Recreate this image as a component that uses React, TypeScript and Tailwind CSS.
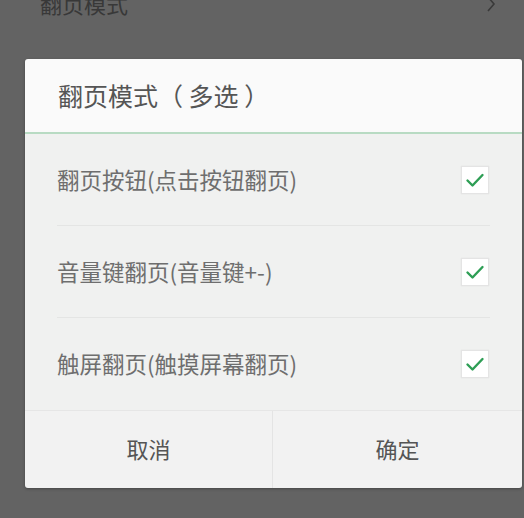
import { useState } from 'react';

const FONT = { fontFamily: '"Noto Sans CJK SC", "Noto Sans", sans-serif' };

const OPTIONS = ['翻页按钮(点击按钮翻页)', '音量键翻页(音量键+-)', '触屏翻页(触摸屏幕翻页)'];

function CheckBox({ checked }: { checked: boolean }) {
  return (
    <div className="flex h-[28px] w-[28px] items-center justify-center border border-[#e4e4e4] bg-white shadow-[0_0_1px_rgba(0,0,0,0.1)]">
      {checked && (
        <svg width="22" height="22" viewBox="0 0 22 22" fill="none">
          <path d="M3.5 11.5 L8.5 16.5 L18.5 6" stroke="#2e9e55" strokeWidth="2.4" strokeLinecap="round" strokeLinejoin="round" />
        </svg>
      )}
    </div>
  );
}

export default function App() {
  const [checked, setChecked] = useState([true, true, true]);

  const toggle = (i: number) => setChecked((c) => c.map((v, j) => (j === i ? !v : v)));

  return (
    <div className="relative h-[518px] w-[524px] overflow-hidden bg-[#636363]" style={FONT}>
      <div className="flex h-[59px] items-start justify-between pl-[40px] pr-[28px]">
        <span className="mt-[-12px] text-[22px] leading-[30px] text-[#383838]">翻页模式</span>
        <svg width="10" height="16" viewBox="0 0 10 16" className="mt-[-4px]" fill="none">
          <path d="M2 1 L8 8 L2 15" stroke="#3a3a3a" strokeWidth="1.6" />
        </svg>
      </div>

      <div className="ml-[25px] w-[497px] overflow-hidden rounded-[3px] shadow-[0_1px_3px_rgba(0,0,0,0.3)]">
        <div className="flex h-[75px] items-center border-b-2 border-[#b8dbc3] bg-[#fafafa] pl-[33px]">
          <span className="whitespace-pre text-[25px] text-[#555555]">翻页模式（ 多选 ）</span>
        </div>

        <div className="bg-[#f0f1f0] px-[32px]">
          {OPTIONS.map((label, i) => (
            <div
              key={label}
              onClick={() => toggle(i)}
              className={`flex h-[92px] cursor-pointer items-center justify-between pr-[1px] ${
                i < OPTIONS.length - 1 ? 'border-b border-[#e4e5e4]' : ''
              }`}
            >
              <span className="text-[22.5px] text-[#6e6e6e]">{label}</span>
              <CheckBox checked={checked[i]} />
            </div>
          ))}
        </div>

        <div className="flex h-[78px] border-t border-[#e6e6e6] bg-[#f2f2f2]">
          <button className="flex flex-1 items-center justify-center border-r border-[#e4e4e4] pb-[3px] text-[22px] text-[#555555]">
            取消
          </button>
          <button className="flex w-[249px] items-center justify-center pb-[3px] text-[22px] text-[#555555]">
            确定
          </button>
        </div>
      </div>
    </div>
  );
}
